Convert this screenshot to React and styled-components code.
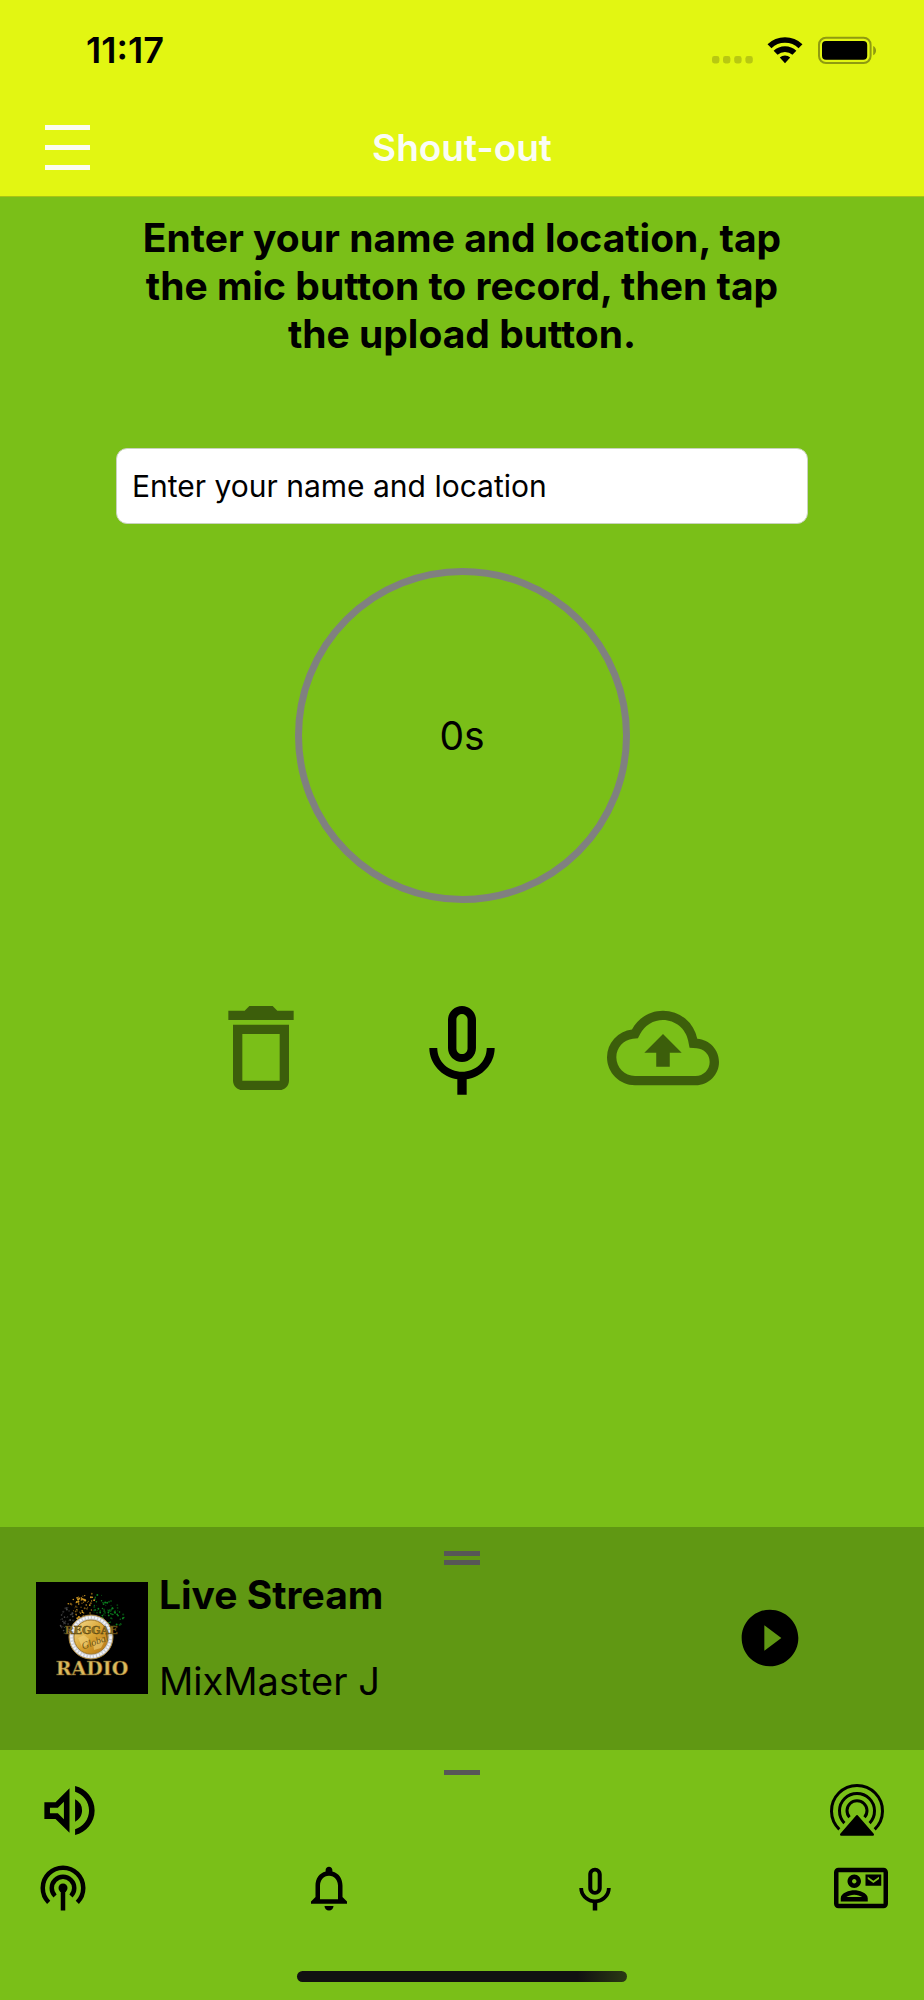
import React, { useState } from 'react'
import styled, { createGlobalStyle } from 'styled-components'
import {
  MdDeleteOutline,
  MdNotificationsNone,
  MdOutlineCloudUpload,
  MdOutlineContactMail,
  MdOutlineVolumeUp,
  MdPlayCircleFilled,
} from 'react-icons/md'

function App() {
  return (
    <Page>
      <GlobalStyle />
      <Header />
      <Shoutout />
      <Player />
      <BottomBar />
    </Page>
  )
}

export default App

function Header() {
  return (
    <Top>
      <StatusBar>
        <Time>11:17</Time>
        <StatusIcons />
      </StatusBar>
      <NavBar>
        <MenuButton aria-label="Menu">
          <MenuLine />
          <MenuLine />
          <MenuLine />
        </MenuButton>
        <Title>Shout-out</Title>
      </NavBar>
    </Top>
  )
}

function StatusIcons() {
  return (
    <svg width="168" height="32" viewBox="0 0 168 32" aria-hidden="true">
      <g fill="#b8c812">
        <rect x="2" y="22" width="7.4" height="7.4" rx="2.4" />
        <rect x="13" y="22" width="7.4" height="7.4" rx="2.4" />
        <rect x="24.2" y="22" width="7.4" height="7.4" rx="2.4" />
        <rect x="35.4" y="22" width="7.4" height="7.4" rx="2.4" />
      </g>
      {/* wifi */}
      <g fill="none" stroke="#000" strokeWidth="5.7">
        <path d="M59.5 12.2a22.5 22.5 0 0 1 31 0" />
        <path d="M65.6 18.8a13.6 13.6 0 0 1 18.8 0" />
      </g>
      <path d="M69.8 23.6a7.6 7.6 0 0 1 10.4 0L75 29.2z" />
      {/* battery */}
      <rect x="109" y="3.7" width="51.6" height="25.4" rx="7" fill="none" stroke="#8f9b10" strokeWidth="2" />
      <rect x="112" y="7" width="45.2" height="18.8" rx="4" />
      <path d="M163.2 12v9.2c3.8-1.6 3.8-7.6 0-9.2z" fill="#8f9b10" />
    </svg>
  )
}

function Shoutout() {
  const [name, setName] = useState('')

  return (
    <Main>
      <Guide>Enter your name and location, tap the mic button to record, then tap the upload button.</Guide>
      <NameInput
        aria-label="Enter your name and location"
        placeholder="Enter your name and location"
        value={name}
        onChange={e => setName(e.target.value)}
      />
      <Timer>0s</Timer>
      <Controls>
        <IconButton aria-label="Delete" $size={112} $dim>
          <MdDeleteOutline />
        </IconButton>
        <IconButton aria-label="Record" $size={112}>
          <MicIcon />
        </IconButton>
        <IconButton aria-label="Upload" $size={112} $dim>
          <MdOutlineCloudUpload />
        </IconButton>
      </Controls>
    </Main>
  )
}

function Player() {
  return (
    <PlayerWrap>
      <Handle>
        <HandleLine />
        <HandleLine />
      </Handle>
      <Track>
        <Cover />
        <TrackText>
          <TrackTitle>Live Stream</TrackTitle>
          <Artist>MixMaster J</Artist>
        </TrackText>
        <IconButton aria-label="Play" $size={68}>
          <MdPlayCircleFilled />
        </IconButton>
      </Track>
    </PlayerWrap>
  )
}

function BottomBar() {
  return (
    <Bottom>
      <Handle>
        <HandleLine />
      </Handle>
      <OutputRow>
        <IconButton aria-label="Volume" $size={67}>
          <MdOutlineVolumeUp />
        </IconButton>
        <IconButton aria-label="AirPlay" $size={62}>
          <AirplayIcon />
        </IconButton>
      </OutputRow>
      <Tabs>
        <IconButton aria-label="Live" $size={54}>
          <AntennaIcon />
        </IconButton>
        <IconButton aria-label="Notifications" $size={54}>
          <MdNotificationsNone />
        </IconButton>
        <IconButton aria-label="Shout-out" $size={54}>
          <MicIcon />
        </IconButton>
        <IconButton aria-label="Contact" $size={54}>
          <MdOutlineContactMail />
        </IconButton>
      </Tabs>
      <HomeIndicator />
    </Bottom>
  )
}

function MicIcon() {
  return (
    <svg viewBox="0 0 24 24" fill="currentColor">
      <path d="M12 15c1.66 0 2.99-1.34 2.99-3L15 6c0-1.66-1.34-3-3-3S9 4.34 9 6v6c0 1.66 1.34 3 3 3zm-1.2-9.1c0-.66.54-1.2 1.2-1.2s1.2.54 1.2 1.2l-.01 6.2c0 .66-.53 1.2-1.19 1.2s-1.2-.54-1.2-1.2V5.9zm6.5 6.1c0 3-2.54 5.1-5.3 5.1S6.7 15 6.7 12H5c0 3.41 2.72 6.23 6 6.72V22h2v-3.28c3.28-.48 6-3.3 6-6.72h-1.7z" />
    </svg>
  )
}

function AntennaIcon() {
  return (
    <svg viewBox="0 0 24 24" fill="none" stroke="currentColor" strokeWidth="2">
      <path d="M5.64 18.36a9 9 0 1 1 12.72 0" />
      <path d="M8.46 15.54a5 5 0 1 1 7.08 0" />
      <circle cx="12" cy="12" r="2" fill="currentColor" stroke="none" />
      <path d="M12 12v10" />
    </svg>
  )
}

function AirplayIcon() {
  return (
    <svg viewBox="0 0 62 62" fill="none" stroke="currentColor" strokeWidth="3">
      <path d="M13.3 49.3a25.5 25.5 0 1 1 35.4 0" />
      <path d="M18.4 43.1a17.5 17.5 0 1 1 25.2 0" />
      <path d="M23.5 37.3a10 10 0 1 1 15 0" />
      <path d="M31 36.2L46.8 54.5H15.2z" fill="currentColor" strokeWidth="2.4" strokeLinejoin="round" />
    </svg>
  )
}

const noise = n => {
  const v = Math.sin(n * 127.1) * 43758.5453
  return v - Math.floor(v)
}

// confetti above the coin
const specks = Array.from({ length: 190 }, (_, i) => {
  const t = noise(i + 1)
  const angle = Math.PI * (1.04 + t * 0.84)
  const reach = 5 + 17 * Math.sin(Math.PI * Math.min(1, t * 0.75 + 0.05))
  const r = 22 + noise(i + 300) * reach
  const bright = noise(i + 700) > 0.4
  let color = bright ? '#4a4a4a' : '#2b2b2b'
  if (t > 0.3) color = bright ? '#d39a22' : '#7a5613'
  if (t > 0.58) color = bright ? '#0c8420' : '#06480f'
  return {
    x: 55 + Math.cos(angle) * r,
    y: 55 + Math.sin(angle) * r,
    size: 0.4 + noise(i + 900) * 0.7,
    color,
  }
})

function Cover() {
  return (
    <CoverArt viewBox="0 0 112 112" role="img" aria-label="Reggae Global Radio">
      <defs>
        <linearGradient id="gold" x1="0" y1="0" x2="1" y2="1">
          <stop offset="0" stopColor="#f5de94" />
          <stop offset="0.5" stopColor="#d9a534" />
          <stop offset="1" stopColor="#b4700f" />
        </linearGradient>
      </defs>
      <rect width="112" height="112" fill="#000" />
      {specks.map((s, i) => (
        <circle key={i} cx={s.x} cy={s.y} r={s.size} fill={s.color} />
      ))}
      <circle cx="55" cy="55" r="22" fill="#c9ccd4" stroke="#b08a3c" strokeWidth="1" />
      <circle cx="55" cy="55" r="19.6" fill="none" stroke="#f4f5f8" strokeWidth="2.4" strokeDasharray="2 1.2" />
      <circle cx="55" cy="55" r="17" fill="url(#gold)" stroke="#a67b28" strokeWidth="1" />
      <path d="M42 56l6-3 5 4-2 7-5 1zM57 60l9-4 3 2-4 8-7 2z" fill="#f1d27a" opacity="0.6" />
      <CoverText x="55" y="52" $size={11} fill="#8f7326" stroke="#4d3a0c" strokeWidth="0.4">REGGAE</CoverText>
      <Script x="59" y="63" transform="rotate(-20 59 60)">Global</Script>
      <CoverText x="56" y="93" $size={19} fill="#dcb95c" stroke="#6b5220" strokeWidth="0.5">RADIO</CoverText>
    </CoverArt>
  )
}

const GlobalStyle = createGlobalStyle`
  * {
    box-sizing: border-box;
  }

  body {
    margin: 0;
    background: #7abf18;
    color: #000;
    font-family: Inter, "Liberation Sans", sans-serif;
  }
`

const Page = styled.div`
  display: flex;
  flex-direction: column;
  min-height: 100vh;
`

const Top = styled.header`
  background: #e2f612;
  border-bottom: 1px solid #a9c414;
`

const StatusBar = styled.div`
  display: flex;
  justify-content: space-between;
  align-items: center;
  height: 100px;
  padding: 0 46px 0 86px;
`

const Time = styled.span`
  font-size: 36px;
  font-weight: 600;
`

const NavBar = styled.div`
  display: grid;
  grid-template-columns: 1fr auto 1fr;
  align-items: center;
  height: 96px;
  padding: 0 45px 2px;
`

const MenuButton = styled.button`
  display: flex;
  flex-direction: column;
  gap: 15px;
  width: 45px;
  padding: 0;
  border: 0;
  background: none;
  cursor: pointer;
`

const MenuLine = styled.span`
  height: 5px;
  background: #fcfdf0;
`

const Title = styled.h1`
  margin: 0;
  color: #fafcf5;
  font-size: 37px;
  font-weight: 600;
`

const Main = styled.main`
  flex: 1;
  display: flex;
  flex-direction: column;
  align-items: center;
  padding: 17px 116px;
`

const Guide = styled.p`
  margin: 0;
  font-size: 39px;
  font-weight: 700;
  line-height: 48px;
  text-align: center;
`

const NameInput = styled.input`
  width: 100%;
  height: 76px;
  margin-top: 90px;
  padding: 0 15px;
  border: 1px solid #c9d3bd;
  border-radius: 11px;
  background: #fff;
  color: #000;
  font-family: inherit;
  font-size: 30px;

  &::placeholder {
    color: #000;
    opacity: 1;
  }
`

const Timer = styled.div`
  display: flex;
  justify-content: center;
  align-items: center;
  width: 335px;
  height: 335px;
  margin-top: 44px;
  border: 7px solid #808080;
  border-radius: 50%;
  font-size: 39px;
`

const Controls = styled.div`
  display: flex;
  justify-content: center;
  gap: 89px;
  margin-top: 89px;
`

const IconButton = styled.button`
  width: ${props => props.$size}px;
  height: ${props => props.$size}px;
  padding: 0;
  border: 0;
  background: none;
  color: #000;
  opacity: ${props => (props.$dim ? 0.5 : 1)};
  cursor: pointer;

  svg {
    display: block;
    width: 100%;
    height: 100%;
  }
`

const PlayerWrap = styled.section`
  padding: 24px 36px 45px;
  background: #609813;
`

const Handle = styled.div`
  display: flex;
  flex-direction: column;
  align-items: center;
  gap: 4px;
`

const HandleLine = styled.span`
  width: 36px;
  height: 5px;
  background: #575757;
`

const Track = styled.div`
  display: flex;
  align-items: center;
  padding: 6px 84px 0 0;
`

const CoverArt = styled.svg`
  width: 112px;
  height: 112px;
`

const CoverText = styled.text`
  font-family: "DejaVu Serif", serif;
  font-size: ${props => props.$size}px;
  font-weight: 700;
  text-anchor: middle;
`

const Script = styled.text`
  fill: #6d5518;
  font-family: "Liberation Serif", serif;
  font-size: 10px;
  font-style: italic;
  text-anchor: middle;
`

const TrackText = styled.div`
  flex: 1;
  display: flex;
  flex-direction: column;
  gap: 38px;
  padding-left: 11px;
  line-height: 48px;
`

const TrackTitle = styled.strong`
  font-size: 39px;
  font-weight: 700;
`

const Artist = styled.span`
  font-size: 38px;
`

const Bottom = styled.footer`
  padding: 20px 36px 18px;
`

const OutputRow = styled.div`
  display: flex;
  justify-content: space-between;
  align-items: center;
  padding-top: 2px;
`

const Tabs = styled.nav`
  display: flex;
  justify-content: space-between;
  margin-top: 17px;
`

const HomeIndicator = styled.div`
  width: 330px;
  height: 11px;
  margin: 56px auto 0;
  border-radius: 6px;
  background: linear-gradient(to right, #111 85%, #2b3a14);
`
